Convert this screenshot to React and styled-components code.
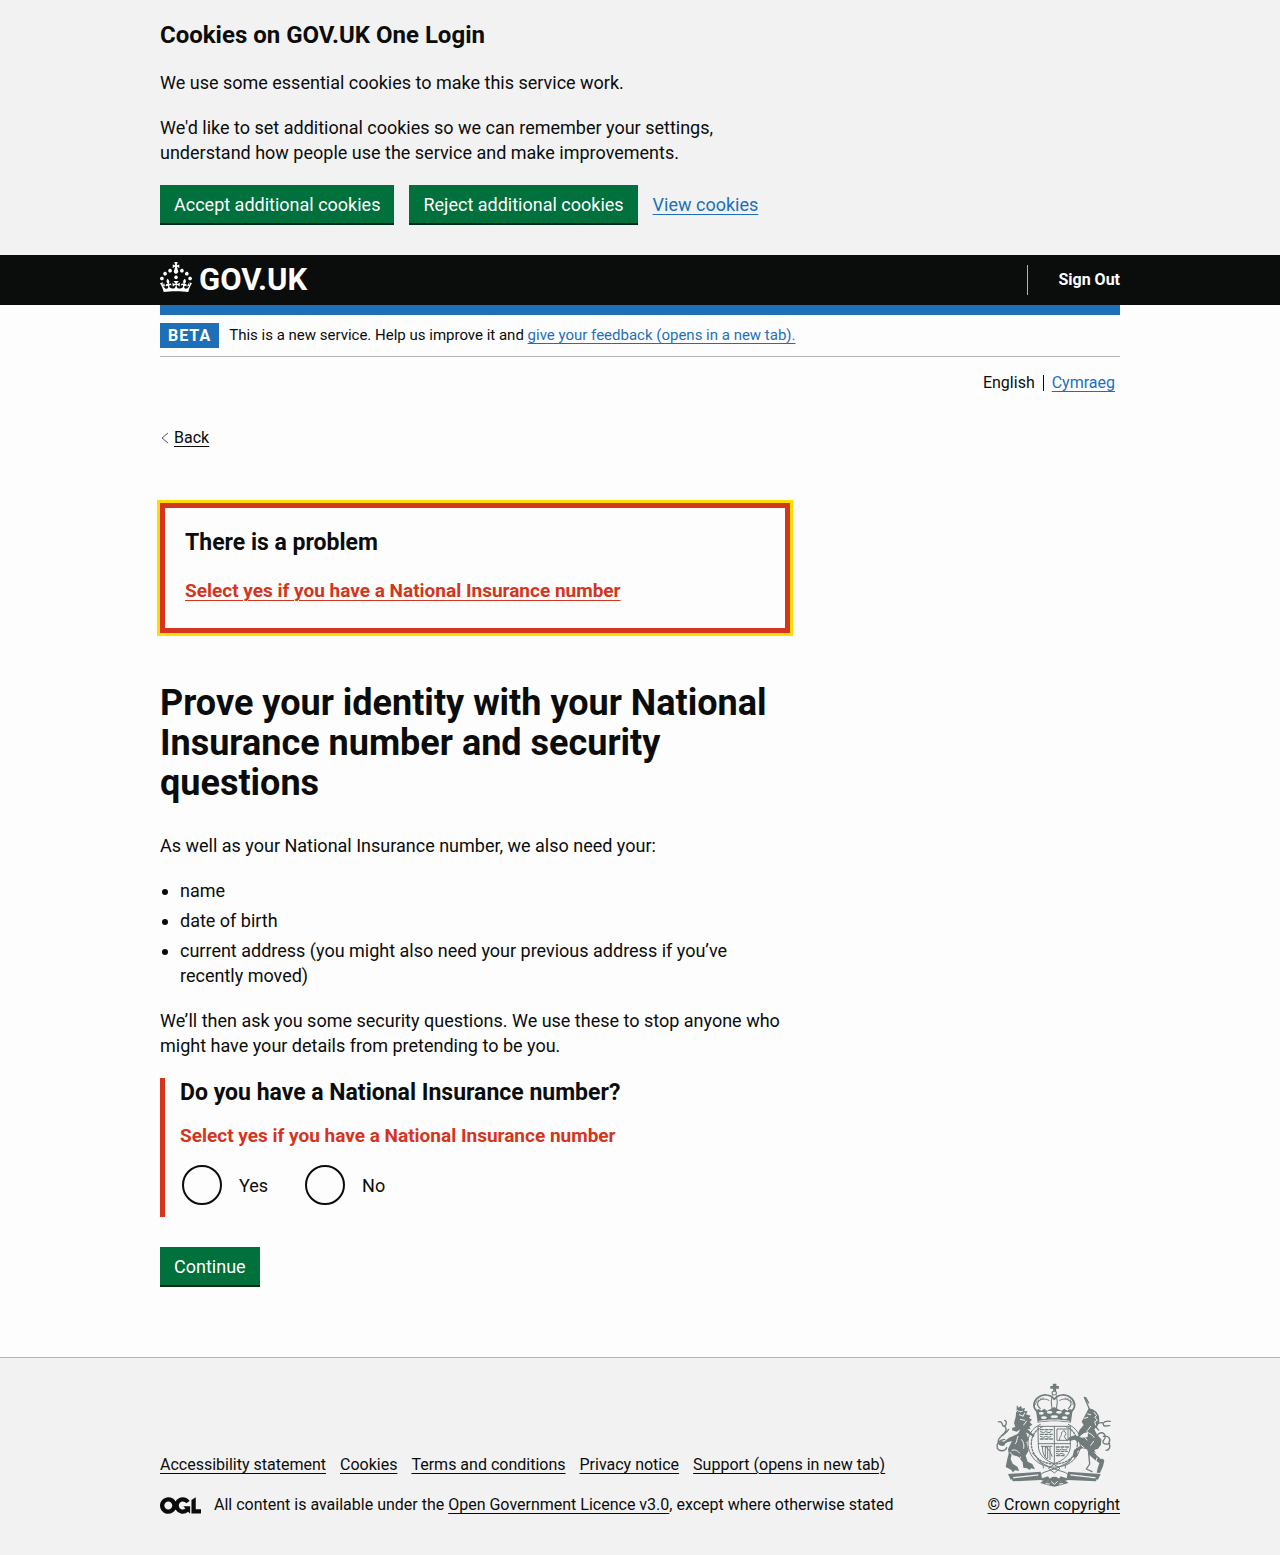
import React from "react";
import styled, { createGlobalStyle } from "styled-components";

const color = {
  text: "#0b0c0c",
  link: "#1d70b8",
  brand: "#1d70b8",
  error: "#d4351c",
  green: "#00703c",
  greenShadow: "#002d18",
  focus: "#ffdd00",
  border: "#b1b4b6",
  panel: "#f2f2f2",
  page: "#fdfdfd",
  crest: "#717b7c",
};

const GlobalStyle = createGlobalStyle`
  *, *::before, *::after { box-sizing: border-box; }
  html { background: ${color.panel}; }
  body {
    margin: 0;
    background: ${color.page};
    color: ${color.text};
    font-family: Roboto, "Liberation Sans", sans-serif;
    font-size: 18px;
    line-height: 25px;
  }
  h1, h2, p, ul, fieldset, legend { margin: 0; padding: 0; }
  fieldset { border: 0; min-width: 0; }
`;

const Container = styled.div`
  max-width: 960px;
  margin: 0 auto;

  @media (max-width: 1020px) {
    margin: 0 30px;
  }
`;

const Column = styled.div`
  max-width: 630px;
`;

const Link = styled.a`
  color: ${({ $tone }) => ($tone === "text" ? color.text : $tone === "error" ? color.error : color.link)};
  font-weight: ${({ $tone }) => ($tone === "error" ? 700 : 400)};
  text-decoration: underline;
  text-decoration-thickness: 1px;
  text-underline-offset: 3px;
`;

const Heading = styled.h2`
  font-size: ${({ $large }) => ($large ? 24 : 23)}px;
  line-height: 30px;
  font-weight: 700;
  margin-bottom: ${({ $gap }) => $gap}px;
`;

const Paragraph = styled.p`
  margin-bottom: 20px;
`;

const Button = styled.button`
  display: inline-flex;
  align-items: center;
  height: 38px;
  margin: 0 0 2px;
  padding: 0 14px;
  border: 0;
  border-radius: 0;
  background: ${color.green};
  box-shadow: 0 2px 0 ${color.greenShadow};
  color: #fff;
  font: inherit;
  cursor: pointer;
`;

const CookieBanner = styled.section`
  background: ${color.panel};
  padding: 20px 0 30px;
`;

const ButtonGroup = styled.div`
  display: flex;
  flex-wrap: wrap;
  align-items: baseline;
  gap: 15px;
`;

const Header = styled.header`
  background: ${color.text};
`;

const HeaderRow = styled(Container)`
  display: flex;
  justify-content: space-between;
  align-items: center;
  height: 50px;
`;

const HomeLink = styled.a`
  display: flex;
  align-items: center;
  gap: 7px;
  color: #fff;
  font-size: 31px;
  line-height: 30px;
  font-weight: 700;
  text-decoration: none;
`;

const Crown = styled.svg`
  width: 32px;
  height: 30px;
  fill: currentColor;
  margin-bottom: 6px;
`;

const HeaderNav = styled.nav`
  border-left: 1px solid ${color.border};
  padding-left: 30px;
  font-size: 16px;
  line-height: 30px;
`;

const SignOut = styled.a`
  color: #fff;
  font-weight: 700;
  text-decoration: none;
`;

const PhaseBanner = styled.div`
  display: flex;
  align-items: center;
  gap: 10px;
  padding: 8px 0;
  border-top: 10px solid ${color.brand};
  border-bottom: 1px solid ${color.border};
  font-size: 15px;
`;

const Tag = styled.strong`
  background: ${color.brand};
  color: #fff;
  padding: 0 8px;
  font-size: 16px;
  letter-spacing: 1px;
`;

const Languages = styled.ul`
  display: flex;
  justify-content: flex-end;
  list-style: none;
  && {
    padding: 18px 5px 0 0;
  }
  font-size: 16px;
  line-height: 16px;
`;

const Language = styled.li`
  & + & {
    margin-left: 8px;
    padding-left: 8px;
    border-left: 1px solid ${color.text};
  }
`;

const BackRow = styled.div`
  display: flex;
  align-items: center;
  gap: 5px;
  margin-top: 37px;
  font-size: 16px;
  line-height: 20px;
`;

const Chevron = styled.svg`
  width: 9px;
  height: 12px;
  fill: none;
  stroke: #505a5f;
`;

const Main = styled.main`
  padding: 55px 0 70px;
`;

const ErrorSummary = styled.div`
  padding: 20px 20px 25px;
  border: 5px solid ${color.error};
  outline: 3px solid ${color.focus};
  margin-bottom: 50px;
  font-size: 19px;
`;

const Title = styled.h1`
  font-size: 36px;
  line-height: 40px;
  font-weight: 700;
  && {
    margin-bottom: 30px;
  }
`;

const Bullets = styled.ul`
  && {
    padding-left: 20px;
    margin-bottom: 20px;
  }
`;

const Bullet = styled.li`
  & + & {
    margin-top: 5px;
  }
`;

const Question = styled.div`
  padding: 0 0 10px 15px;
  border-left: 5px solid ${color.error};
  margin-bottom: 30px;
`;

const ErrorMessage = styled.p`
  color: ${color.error};
  font-size: 19px;
  font-weight: 700;
  && {
    margin-bottom: 15px;
  }
`;

const Radios = styled.div`
  display: flex;
  flex-wrap: wrap;
  gap: 20px;
`;

const RadioItem = styled.div`
  display: flex;
  align-items: center;
`;

const RadioInput = styled.input`
  appearance: none;
  width: 40px;
  height: 40px;
  margin: 2px;
  border: 2px solid ${color.text};
  border-radius: 50%;
  cursor: pointer;

  &:checked {
    background: radial-gradient(${color.text} 10px, transparent 11px);
  }
`;

const RadioLabel = styled.label`
  padding: 0 15px;
  cursor: pointer;
`;

const Footer = styled.footer`
  background: ${color.panel};
  border-top: 1px solid ${color.border};
  padding: 25px 0 40px;
  font-size: 16px;
  line-height: 20px;
`;

const FooterRow = styled(Container)`
  display: flex;
  flex-wrap: wrap;
  align-items: flex-end;
  justify-content: space-between;
  gap: 20px 30px;
`;

const FooterLinks = styled.ul`
  display: flex;
  flex-wrap: wrap;
  gap: 10px 14px;
  list-style: none;
  && {
    margin-bottom: 20px;
  }
`;

const Licence = styled.p`
  display: flex;
  align-items: center;
  gap: 13px;
`;

const OglLogo = styled.svg`
  flex: none;
  width: 41px;
  height: 17px;
  fill: ${color.text};
`;

const Copyright = styled.a`
  display: flex;
  flex-direction: column;
  align-items: center;
  gap: 8px;
  color: ${color.text};
  text-decoration: underline;
  text-decoration-thickness: 1px;
  text-underline-offset: 3px;
`;

const CrestDrawing = styled.svg`
  width: 117px;
  height: 104px;
  fill: none;
  stroke: ${color.crest};
  stroke-width: 4;
  stroke-linecap: round;
  stroke-linejoin: round;

  .solid {
    fill: ${color.crest};
    stroke: none;
  }
  .fine {
    stroke-width: 3;
  }
`;

function Crest() {
  return (
    <CrestDrawing viewBox="45 36 351 312" aria-hidden="true">
      {/* crown */}
      <g transform="translate(-18 0) scale(1.08 1)">
        <path className="solid" d="M219 38h10v7h7v8h-8v8h-8v-8h-8v-8h7z" />
        <circle className="fine" cx="223" cy="66" r="6" />
        <path strokeWidth="5" d="M176 122c-8-8-12-20-7-31 6-13 21-21 33-19 9 1 17 6 21 13 4-7 12-12 21-13 12-2 27 6 33 19 5 11 1 23-7 31" />
        <path className="fine" d="M184 113c-8-8-9-17-4-23 7-8 20-8 28-2M262 113c8-8 9-17 4-23-7-8-20-8-28-2M217 74c-3 12-3 28 0 40M229 74c3 12 3 28 0 40" />
        <path className="fine" strokeDasharray="2 5" d="M171 100c3-12 15-19 26-19M275 100c-3-12-15-19-26-19" />
        <path className="solid" d="M172 118l8-4 7 5 8-6 8 6 10-5 10-6 10 6 10 5 8-6 8 6 7-5 8 4-5 37c-30-6-62-6-92 0z" />
        <g fill={color.panel} stroke="none">
          <ellipse cx="187" cy="127" rx="7" ry="4" />
          <ellipse cx="210" cy="124" rx="8" ry="4" />
          <ellipse cx="236" cy="124" rx="8" ry="4" />
          <ellipse cx="259" cy="127" rx="7" ry="4" />
          <ellipse cx="194" cy="140" rx="8" ry="4" />
          <ellipse cx="223" cy="137" rx="10" ry="4" />
          <ellipse cx="252" cy="140" rx="8" ry="4" />
          <path d="M180 150c28-6 58-6 86 0v2c-28-5-58-5-86 0z" />
        </g>
      </g>

      {/* garter and shield */}
      <path className="fine" d="M181 160c-26 12-39 34-37 60 2 30 22 56 50 64 18 6 40 6 58 0 28-8 48-34 50-64 2-26-11-48-37-60" />
      <path strokeDasharray="5 5" d="M186 168c-22 10-33 30-32 53 2 27 19 47 43 54 16 5 36 5 52 0 24-7 41-27 43-54 1-23-10-43-32-53" />
      <path className="fine" d="M175 166h96v58c0 28-20 44-48 54-28-10-48-26-48-54z" />
      <path className="fine" d="M223 166v112M175 218h96" />
      <path strokeDasharray="9 5" d="M181 176h36M181 190h36M181 204h36" />
      <path className="fine" d="M181 182l10 3 6-3 10 3 6-3M181 196l10 3 6-3 10 3 6-3M232 174h32v34h-32zM238 206c2-12 8-10 6-20l8-8 6 10-5 9 7 10" />
      <path className="fine" d="M184 226h32M187 226c0 18 4 30 14 38M196 228v28M203 228v34M210 228v38M196 228c8 3 16 14 20 28" />
      <path strokeDasharray="9 5" d="M229 228h36M229 241h33M229 254h25" />
      <path className="fine" d="M229 234l10 3 6-3 10 3 6-3M229 247l8 3 6-3 10 3" />

      {/* lion */}
      <path className="solid" d="M111 102l5 8 7-6 3 9 9-3-2 10 10 1-5 9 14 4-5 7 9 5-7 7 8 8-9 6 4 8-10-1 22 20-4 4-22-14 8 22-7 8 7 25-9 15 6 18 14 7 8 16-12-3-4 5-8-5-11-2-2-16-13-17-20-6-3 13 6 14 15 10 4 12-12-2-6 6-6-8-16-8 5-25 4-15-2-14 12-24-14 4-13 9-9-1-4-7 7-5 9 2 14-11 28-13 7-13-11 7-14-4 1-8 9-2-4-12 5-18z" />
      <path d="M55 153c10-4 12 6 14 12 12 2 12-16 5-17M74 205c-18 2-26 14-22 27 6 10 23 10 28-2M86 175c-7 16-28 19-31 33-2 14 10 17 18 13M72 165c14 10 2 22-9 31" />
      <g stroke={color.panel} strokeWidth="3">
        <path d="M112 118c4 5 10 5 15 3M118 131l10 4M121 145l13 3M114 196c-4 8-2 16-8 22M125 206c6 8 8 16 6 26M96 238c10-4 18 2 22 8" />
        <path d="M106 110l3 12M134 126l-5 10M140 150l-9 12M90 244l8 9M121 258l-4 12" />
      </g>

      {/* unicorn */}
      <path d="M313 79l18 42M317 80l9 16" />
      <path className="solid" d="M326 112l12 3 11 7 8 13 1 16-6 14-9 10 9 17 12 13-1 16-9 12-11 4 8 15 11 12 7-1 4 6-4 17-9 20-10-1 3-13 5-16-13-9-18-16-6-16-14-3-15 9 1 13-11 8-4-8 4-17 18-12-3-11-14-8-13 4-8-4 7-8 15-5 20 7 19-2 1-15-13 4-10 7-8-5 6-13 12-14-6-10z" />
      <path d="M356 177c-14-10-4-26 14-21 4-6 12-6 21-5M369 157c2 14 12 5 20 7M352 193c13-19 32 1 20 13-8 7 0 18 17 11M370 196c16-4 23 8 17 18M387 218c6 9 1 20-9 20M340 226l-14 21 3 32-10 15 17 8M300 191l-13 12" />
      <g stroke={color.panel} strokeWidth="3">
        <path d="M323 129l9 2M342 124l8 10-6 4 8 10-8 4 3 10M320 181c8 9 18 8 22 18M332 166l-9 12M312 196l9 11M341 211l-9 12M344 244l10 12" />
        <path d="M313 142l10-3M351 261l-5 14M303 223l9 7" />
      </g>

      {/* compartment, motto and roses */}
      <path className="fine" d="M157 246l28 30 30 15 42 14 20 18M289 246l-28 30-30 15-42 14-20 18M172 266c12 12 20 13 18 25M274 266c-12 12-20 13-18 25M206 292l17 14 17-14-17-11z" />
      <path className="solid" d="M84 309l98-7 4 20 18-6 6 8-8 9-20-6-84 4-2-6-4 1zM362 309l-98-7-4 20-18-6-6 8 8 9 20-6 84 4 2-6 4 1z" />
      <g stroke={color.panel} strokeWidth="4" strokeDasharray="4 3">
        <path d="M101 320l72-8M273 312l72 8" />
      </g>
      <path className="solid" d="M181 336c8-9 16-8 22-3 3-10 11-16 20-16s17 6 20 16c6-5 14-6 22 3l-20 6-22 5-22-5z" />
      <path stroke={color.panel} className="fine" d="M214 332l9 8 9-8M198 338l10 1M248 338l-10 1" />
    </CrestDrawing>
  );
}

const footerLinks = [
  "Accessibility statement",
  "Cookies",
  "Terms and conditions",
  "Privacy notice",
  "Support (opens in new tab)",
];

const answers = [
  { id: "nino-yes", value: "yes", label: "Yes" },
  { id: "nino-no", value: "no", label: "No" },
];

export default function App() {
  return (
    <>
      <GlobalStyle />
      <CookieBanner aria-labelledby="cookie-title">
        <Container>
          <Column>
            <Heading id="cookie-title" $large $gap={20}>Cookies on GOV.UK One Login</Heading>
            <Paragraph>We use some essential cookies to make this service work.</Paragraph>
            <Paragraph>
              We'd like to set additional cookies so we can remember your settings, understand how
              people use the service and make improvements.
            </Paragraph>
            <ButtonGroup>
              <Button type="button">Accept additional cookies</Button>
              <Button type="button">Reject additional cookies</Button>
              <Link href="#cookies">View cookies</Link>
            </ButtonGroup>
          </Column>
        </Container>
      </CookieBanner>

      <Header>
        <HeaderRow>
          <HomeLink href="#home">
            <Crown viewBox="0 0 32 30" aria-hidden="true">
              <path d="M22.6 10.4c-1 .4-2-.1-2.4-1-.4-.9.1-2 1-2.4.9-.4 2 .1 2.4 1s-.1 2-1 2.4m-5.9 6.7c-.9.4-2-.1-2.4-1-.4-.9.1-2 1-2.4.9-.4 2 .1 2.4 1s-.1 2-1 2.4m10.8-3.7c-1 .4-2-.1-2.4-1-.4-.9.1-2 1-2.4.9-.4 2 .1 2.4 1s0 2-1 2.4m3.3 4.8c-1 .4-2-.1-2.4-1-.4-.9.1-2 1-2.4.9-.4 2 .1 2.4 1s-.1 2-1 2.4M17 4.7l2.3 1.2V2.5l-2.3.7-.2-.2.9-3h-3.4l.9 3-.2.2c-.1.1-2.3-.7-2.3-.7v3.4L15 4.7c.1.1.1.2.2.2l-1.3 4c-.1.2-.1.4-.1.6 0 1.1.8 2 1.9 2.2h.7c1-.2 1.9-1.1 1.9-2.1 0-.2 0-.4-.1-.6l-1.3-4c-.1-.2 0-.2.1-.3m-7.6 5.7c.9.4 2-.1 2.4-1 .4-.9-.1-2-1-2.4-.9-.4-2 .1-2.4 1s0 2 1 2.4m-5 3c.9.4 2-.1 2.4-1 .4-.9-.1-2-1-2.4-.9-.4-2 .1-2.4 1s.1 2 1 2.4m-3.2 4.8c.9.4 2-.1 2.4-1 .4-.9-.1-2-1-2.4-.9-.4-2 .1-2.4 1s0 2 1 2.4m14.8 11c4.4 0 8.6.3 12.3.8 1.1-4.5 2.4-7 3.7-8.8l-2.5-.9c.2 1.3.3 1.9 0 2.7-.4-.4-.8-1.1-1.1-2.3l-1.2 4c.7-.5 1.3-.8 2-.9-1.1 2.5-2.6 3.1-3.5 3-1.1-.2-1.7-1.2-1.5-2.1.3-1.2 1.5-1.5 2.1-.1 1.1-2.3-.8-3-2-2.3 1.9-1.9 2.1-3.5.6-5.6-2.1 1.6-2.1 3.2-1.2 5.5-1.2-1.4-3.2-.6-2.5 1.6.9-1.4 2.1-.5 1.9.8-.2 1.1-1.7 2.1-3.5 1.9-2.7-.2-2.9-2.1-2.9-3.6.7-.1 1.9.5 2.9 1.9l.4-4.3c-1.1 1.1-2.1 1.4-3.2 1.4.4-1.2 2.1-3 2.1-3h-5.4s1.7 1.9 2.1 3c-1.1 0-2.1-.2-3.2-1.4l.4 4.3c1-1.4 2.2-2 2.9-1.9-.1 1.5-.2 3.4-2.9 3.6-1.9.2-3.4-.8-3.5-1.9-.2-1.3 1-2.2 1.9-.8.7-2.3-1.2-3-2.5-1.6.9-2.2.9-3.9-1.2-5.5-1.5 2-1.3 3.7.6 5.6-1.2-.7-3.1 0-2 2.3.6-1.4 1.8-1.1 2.1.1.2.9-.3 1.9-1.5 2.1-.9.2-2.4-.5-3.5-3 .6 0 1.2.3 2 .9l-1.2-4c-.3 1.1-.7 1.9-1.1 2.3-.3-.8-.2-1.4 0-2.7l-2.9.9C1.3 23 2.6 25.5 3.7 30c3.7-.5 7.9-.8 12.3-.8" />
            </Crown>
            GOV.UK
          </HomeLink>
          <HeaderNav>
            <SignOut href="#sign-out">Sign Out</SignOut>
          </HeaderNav>
        </HeaderRow>
      </Header>

      <Container>
        <PhaseBanner>
          <Tag>BETA</Tag>
          <span>
            This is a new service. Help us improve it and{" "}
            <Link href="#feedback">give your feedback (opens in a new tab).</Link>
          </span>
        </PhaseBanner>
        <nav aria-label="Language">
          <Languages>
            <Language>English</Language>
            <Language>
              <Link href="#cy" lang="cy">Cymraeg</Link>
            </Language>
          </Languages>
        </nav>
        <BackRow>
          <Chevron viewBox="0 0 9 12" aria-hidden="true">
            <path d="M8 1L2 6l6 5" />
          </Chevron>
          <Link $tone="text" href="#back">Back</Link>
        </BackRow>

        <Main>
          <Column>
            <ErrorSummary role="alert">
              <Heading $gap={20}>There is a problem</Heading>
              <Link $tone="error" href="#nino-yes">
                Select yes if you have a National Insurance number
              </Link>
            </ErrorSummary>

            <Title>Prove your identity with your National Insurance number and security questions</Title>
            <Paragraph>As well as your National Insurance number, we also need your:</Paragraph>
            <Bullets>
              <Bullet>name</Bullet>
              <Bullet>date of birth</Bullet>
              <Bullet>
                current address (you might also need your previous address if you’ve recently moved)
              </Bullet>
            </Bullets>
            <Paragraph>
              We’ll then ask you some security questions. We use these to stop anyone who might have
              your details from pretending to be you.
            </Paragraph>

            <form onSubmit={(event) => event.preventDefault()}>
              <Question>
                <fieldset aria-describedby="nino-error">
                  <legend>
                    <Heading $gap={15}>Do you have a National Insurance number?</Heading>
                  </legend>
                  <ErrorMessage id="nino-error">
                    Select yes if you have a National Insurance number
                  </ErrorMessage>
                  <Radios>
                    {answers.map((answer) => (
                      <RadioItem key={answer.id}>
                        <RadioInput type="radio" name="nino" id={answer.id} value={answer.value} />
                        <RadioLabel htmlFor={answer.id}>{answer.label}</RadioLabel>
                      </RadioItem>
                    ))}
                  </Radios>
                </fieldset>
              </Question>
              <Button type="submit">Continue</Button>
            </form>
          </Column>
        </Main>
      </Container>

      <Footer>
        <FooterRow>
          <div>
            <FooterLinks>
              {footerLinks.map((label) => (
                <li key={label}>
                  <Link $tone="text" href="#footer">{label}</Link>
                </li>
              ))}
            </FooterLinks>
            <Licence>
              <OglLogo viewBox="0 0 483.2 195.7" aria-hidden="true">
                <path d="M421.5 142.8V.1l-50.7 32.3v161.1h112.4v-50.7zm-122.3-9.6A47.12 47.12 0 0 1 221 97.8c0-26 21.1-47.1 47.1-47.1 16.7 0 31.4 8.7 39.7 21.8l42.7-27.2A97.63 97.63 0 0 0 268.1 0c-36.5 0-68.3 20.1-85.1 49.7A98 98 0 0 0 97.8 0C43.9 0 0 43.9 0 97.8s43.9 97.8 97.8 97.8c36.5 0 68.3-20.1 85.1-49.7a97.76 97.76 0 0 0 149.6 25.4l19.4 22.2h3v-87.8h-80l24.3 27.5zM97.8 145c-26 0-47.1-21.1-47.1-47.1s21.1-47.1 47.1-47.1 47.1 21.1 47.1 47.1S123.8 145 97.8 145" />
              </OglLogo>
              <span>
                All content is available under the{" "}
                <Link $tone="text" href="#licence">Open Government Licence v3.0</Link>, except where
                otherwise stated
              </span>
            </Licence>
          </div>
          <Copyright href="#copyright">
            <Crest />
            <span>© Crown copyright</span>
          </Copyright>
        </FooterRow>
      </Footer>
    </>
  );
}
